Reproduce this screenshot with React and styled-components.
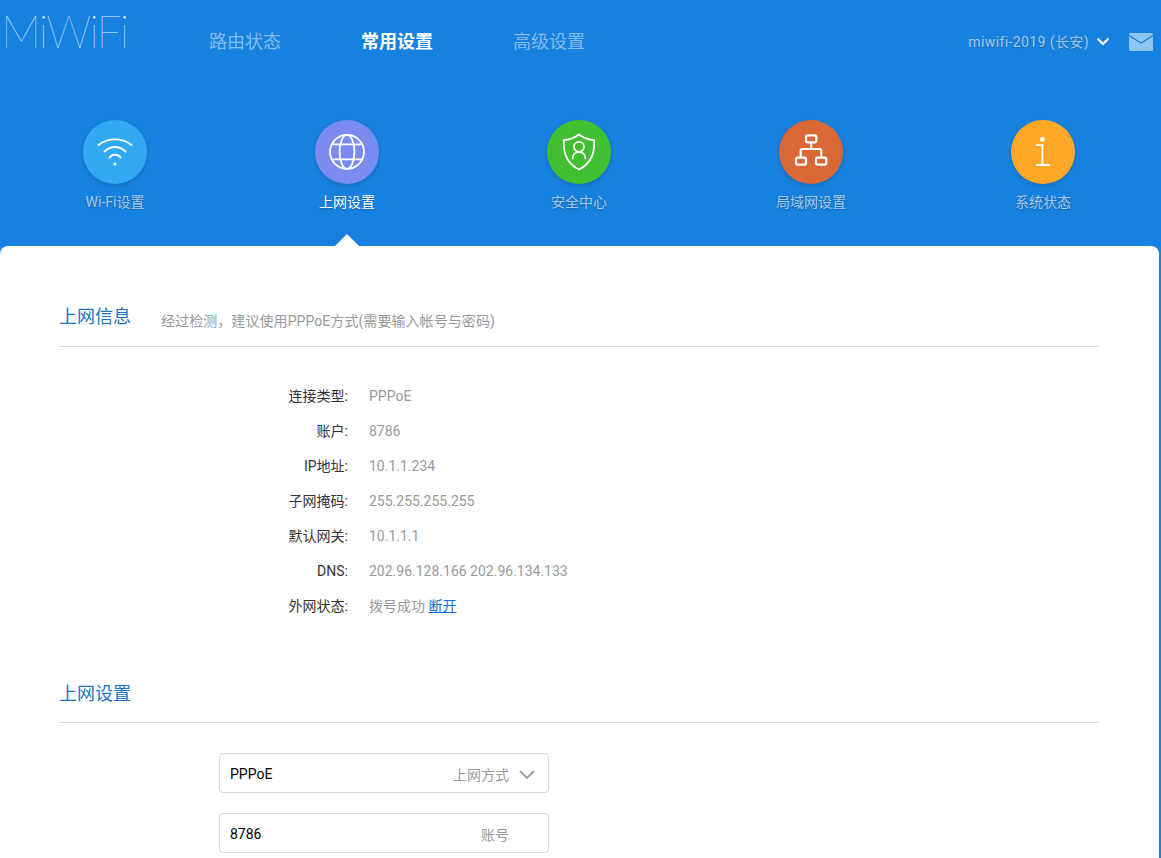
import React from "react";
import styled, { createGlobalStyle } from "styled-components";

const FONT = `Roboto, "Noto Sans CJK SC", sans-serif`;

const GlobalStyle = createGlobalStyle`
  html, body {
    margin: 0;
    height: 858px;
    overflow: hidden;
    background: #1781df;
    font-family: ${FONT};
  }
`;

const Header = styled.header`
  height: 246px;
`;

const TopBar = styled.div`
  display: flex;
  height: 84px;
  padding: 0 8px 0 5px;
`;

const Logo = styled.div`
  width: 204px;
  height: 62px;
  margin-left: -4px;
  margin-right: 4px;
  font-family: Lato, sans-serif;
  font-weight: 100;
  font-size: 45px;
  line-height: 62px;
  letter-spacing: -1.9px;
  color: #e4f1fc;
`;

const MainNav = styled.nav`
  display: flex;
  gap: 80px;
  padding-top: 28px;
`;

const MainNavItem = styled.a`
  font-size: 18px;
  line-height: 28px;
  font-weight: ${(props) => (props.$active ? 700 : 400)};
  color: ${(props) => (props.$active ? "#fff" : "#84bbec")};
`;

const Account = styled.div`
  display: flex;
  align-items: flex-start;
  margin-left: auto;
  padding-top: 32px;
  color: #a9c6e2;
  font-size: 14px;
  line-height: 20px;
  letter-spacing: 0.4px;
  text-shadow: 0 1px 1px rgba(0, 0, 0, 0.2);
`;

const Chevron = styled.svg`
  width: 14px;
  height: 9px;
  margin: 5px 0 0 7px;
`;

const MailIcon = styled.svg`
  width: 24px;
  height: 18px;
  margin: 1px 0 0 19px;
`;

const IconNav = styled.nav`
  display: grid;
  grid-template-columns: repeat(5, 232px);
  margin-left: -1px;
  padding-top: 36px;
`;

const IconNavItem = styled.a`
  position: relative;
  display: flex;
  flex-direction: column;
  align-items: center;
  height: 126px;
`;

const IconCircle = styled.span`
  display: block;
  width: 64px;
  height: 64px;
  border-radius: 50%;
  background: ${(props) => props.$color};
  box-shadow: 0 2px 4px rgba(0, 0, 0, 0.15);
`;

const IconLabel = styled.span`
  margin-top: 8px;
  font-size: 14px;
  line-height: 20px;
  color: ${(props) => (props.$active ? "#fff" : "#a6c8e8")};
  text-shadow: 0 1px 2px rgba(0, 0, 0, 0.25);
`;

const Caret = styled.span`
  position: absolute;
  left: 50%;
  bottom: 0;
  margin-left: -12px;
  border-left: 12px solid transparent;
  border-right: 12px solid transparent;
  border-bottom: 12px solid #fff;
`;

const Panel = styled.main`
  width: 1159px;
  height: 612px;
  box-sizing: border-box;
  padding: 0 60px 0 59px;
  background: #fff;
  border-radius: 8px 8px 0 0;
`;

const SectionHead = styled.div`
  display: flex;
  align-items: baseline;
  gap: 30px;
  height: ${(props) => props.$height}px;
  box-sizing: border-box;
  padding-top: ${(props) => props.$top}px;
  border-bottom: 1px solid #d9d9d9;
`;

const SectionTitle = styled.h2`
  margin: 0;
  font-size: 18px;
  line-height: 26px;
  font-weight: 400;
  color: #2173bd;
`;

const SectionHint = styled.span`
  position: relative;
  top: 3px;
  font-size: 14px;
  letter-spacing: 0.07px;
  color: #999;
`;

const InfoList = styled.div`
  padding: 31px 0 30px;
`;

const InfoRow = styled.div`
  display: grid;
  grid-template-columns: 289px 1fr;
  column-gap: 21px;
  height: 35px;
  font-size: 14px;
  line-height: 37px;
`;

const InfoLabel = styled.span`
  text-align: right;
  color: #333;
`;

const InfoValue = styled.span`
  color: #999;
`;

const InfoLink = styled.a`
  color: #0a6fd8;
  text-decoration: underline;
`;

const Form = styled.form`
  display: flex;
  flex-direction: column;
  gap: 20px;
  padding: 30px 0 0 160px;
`;

const Field = styled.div`
  display: flex;
  align-items: center;
  width: 330px;
  height: 40px;
  box-sizing: border-box;
  padding: 2px 13px 0 10px;
  border: 1px solid #d9d9d9;
  border-radius: 4px;
  font-size: 14px;
  color: #000;
`;

const FieldHint = styled.span`
  margin-left: auto;
  padding-right: ${(props) => (props.$pad ? 26 : 0)}px;
  color: #999;
`;

const FieldArrow = styled.svg`
  width: 16px;
  height: 9px;
  margin-left: 10px;
`;

const Glyph = styled.svg`
  display: block;
  width: 64px;
  height: 64px;
  fill: none;
  stroke: #fff;
  stroke-width: ${(props) => props.$weight || 1.8};
`;

const WifiGlyph = () => (
  <Glyph viewBox="0 0 64 64" strokeLinecap="round">
    <path d="M15.5 25C25 17.5 39 17.5 48.5 25" />
    <path d="M21.5 31.5C27.5 25.5 36.5 25.5 42.5 31.5" />
    <path d="M26.5 37.5C29.5 33.7 34.5 33.7 37.5 37.5" />
    <circle cx="32" cy="44" r="1.6" fill="#fff" stroke="none" />
  </Glyph>
);

const GlobeGlyph = () => (
  <Glyph viewBox="0 0 64 64">
    <circle cx="32" cy="31.8" r="17" />
    <ellipse cx="32" cy="31.8" rx="7.4" ry="17" />
    <path d="M17.5 24.3H46.5M17.5 39.3H46.5" />
  </Glyph>
);

const ShieldGlyph = () => (
  <Glyph viewBox="0 0 64 64" strokeLinecap="round">
    <path d="M32 14.5C27.5 18 22.5 19.8 16.8 20.2C16 34 20 43.5 32 49.5C44 43.5 48 34 47.2 20.2C41.5 19.8 36.5 18 32 14.5Z" />
    <circle cx="32" cy="26.8" r="5" />
    <path d="M25.6 38.5C25.6 30 38.4 30 38.4 38.5" />
  </Glyph>
);

const LanGlyph = () => (
  <Glyph viewBox="0 0 64 64" $weight={2.2}>
    <rect x="27" y="15.3" width="10.3" height="7" rx="1.6" />
    <rect x="17" y="37.7" width="10" height="7" rx="1.6" />
    <rect x="37" y="37.7" width="10.3" height="7" rx="1.6" />
    <path d="M32.2 22.3V29M21.7 37.7V31C21.7 29.8 22.5 29 23.7 29H40.3C41.5 29 42.3 29.8 42.3 31V37.7" />
  </Glyph>
);

const InfoGlyph = () => (
  <Glyph viewBox="0 0 64 64">
    <circle cx="31.4" cy="19.4" r="2.4" fill="#fff" stroke="none" />
    <path d="M25 25.2H31.4V45M25 45H39" />
  </Glyph>
);

const navItems = [
  { label: "Wi-Fi设置", color: "#33a9f3", Icon: WifiGlyph },
  { label: "上网设置", color: "#7c8bf0", Icon: GlobeGlyph, active: true },
  { label: "安全中心", color: "#41bf30", Icon: ShieldGlyph },
  { label: "局域网设置", color: "#da6836", Icon: LanGlyph },
  { label: "系统状态", color: "#ffa726", Icon: InfoGlyph },
];

const infoRows = [
  ["连接类型:", "PPPoE"],
  ["账户:", "8786"],
  ["IP地址:", "10.1.1.234"],
  ["子网掩码:", "255.255.255.255"],
  ["默认网关:", "10.1.1.1"],
  ["DNS:", "202.96.128.166 202.96.134.133"],
];

export default function App() {
  return (
    <>
      <GlobalStyle />
      <Header>
        <TopBar>
          <Logo>MiWiFi</Logo>
          <MainNav>
            <MainNavItem>路由状态</MainNavItem>
            <MainNavItem $active>常用设置</MainNavItem>
            <MainNavItem>高级设置</MainNavItem>
          </MainNav>
          <Account>
            miwifi-2019 (长安)
            <Chevron viewBox="0 0 14 9" fill="none" stroke="#fff" strokeWidth="2">
              <path d="M1.5 1.5L7 7L12.5 1.5" />
            </Chevron>
            <MailIcon viewBox="0 0 24 18">
              <rect width="24" height="18" rx="1.5" fill="#8ec5f4" />
              <path d="M0 2.5L12 10L24 2.5" fill="none" stroke="#1781df" strokeWidth="1.2" />
            </MailIcon>
          </Account>
        </TopBar>
        <IconNav>
          {navItems.map(({ label, color, Icon, active }) => (
            <IconNavItem key={label}>
              <IconCircle $color={color}>
                <Icon />
              </IconCircle>
              <IconLabel $active={active}>{label}</IconLabel>
              {active && <Caret />}
            </IconNavItem>
          ))}
        </IconNav>
      </Header>
      <Panel>
        <SectionHead $height={101} $top={58}>
          <SectionTitle>上网信息</SectionTitle>
          <SectionHint>经过检测，建议使用PPPoE方式(需要输入帐号与密码)</SectionHint>
        </SectionHead>
        <InfoList>
          {infoRows.map(([label, value]) => (
            <InfoRow key={label}>
              <InfoLabel>{label}</InfoLabel>
              <InfoValue>{value}</InfoValue>
            </InfoRow>
          ))}
          <InfoRow>
            <InfoLabel>外网状态:</InfoLabel>
            <InfoValue>
              拨号成功 <InfoLink>断开</InfoLink>
            </InfoValue>
          </InfoRow>
        </InfoList>
        <SectionHead $height={70} $top={28}>
          <SectionTitle>上网设置</SectionTitle>
        </SectionHead>
        <Form>
          <Field>
            PPPoE
            <FieldHint>上网方式</FieldHint>
            <FieldArrow viewBox="0 0 16 9" fill="none" stroke="#999" strokeWidth="1.8">
              <path d="M1 1L8 8L15 1" />
            </FieldArrow>
          </Field>
          <Field>
            8786
            <FieldHint $pad>账号</FieldHint>
          </Field>
        </Form>
      </Panel>
    </>
  );
}
